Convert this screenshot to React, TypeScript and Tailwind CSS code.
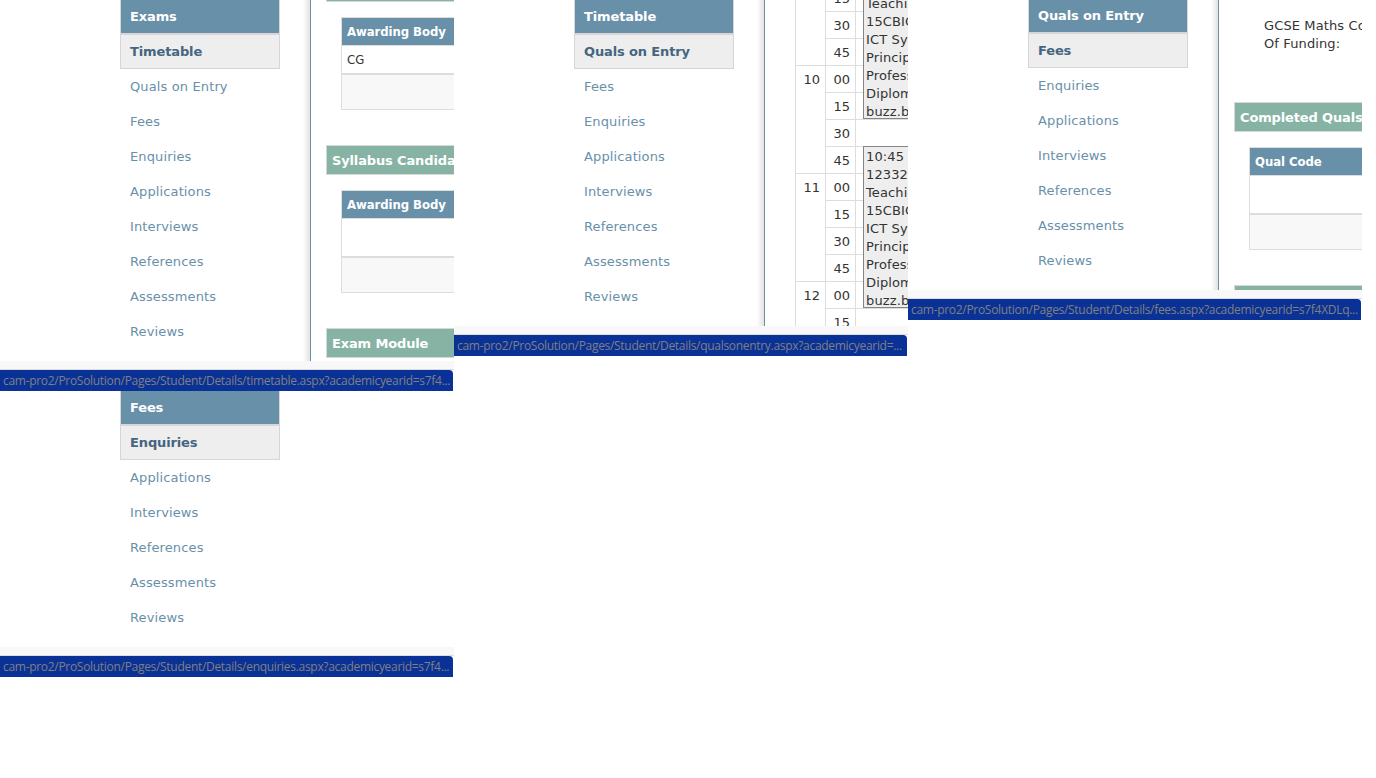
import type { ReactNode } from "react";

const navItems = [
  "Exams", "Timetable", "Quals on Entry", "Fees", "Enquiries",
  "Applications", "Interviews", "References", "Assessments", "Reviews",
];

function Shot({ start, height, status, navClass = "-mt-px", children }: {
  start: number; height: string; status: string; navClass?: string; children?: ReactNode;
}) {
  return (
    <section className="w-[454px] shrink-0 overflow-hidden">
      <div className={`flex overflow-hidden ${height}`}>
        <nav className={`ml-[120px] w-[160px] shrink-0 ${navClass}`}>
          {navItems.slice(start).map((item, i) => (
            <div
              key={item}
              className={
                "h-[35px] border pl-[9px] leading-[33px] whitespace-nowrap " +
                (i === 0
                  ? "border-[#d8d6d8] bg-[#6990a9] font-bold tracking-[-0.13px] text-white"
                  : i === 1
                    ? "border-[#d8d4d8] bg-[#eeeeee] font-bold tracking-[-0.13px] text-[#456580]"
                    : "border-transparent tracking-[0.13px] text-[#6990a9]")
              }
            >
              {item}
            </div>
          ))}
        </nav>
        {children && (
          <>
            <div className="ml-[23px] w-[7px] shrink-0 bg-linear-to-r from-white to-[#e2e2e2]" />
            <main className="w-[144px] shrink-0 overflow-hidden border-l border-[#6990a9] text-[#333333]">{children}</main>
          </>
        )}
      </div>
      <div className="h-[9px] border-b border-[#dddddd] bg-[#f8f8f8]" />
      <div className="h-[21px] w-[453px] overflow-hidden rounded-tr-[4px] bg-[#0a3196] pl-[3px] font-['Open_Sans',sans-serif] text-[12px] leading-[21px] tracking-[-0.3px] whitespace-nowrap text-[#808080]">
        {status}
      </div>
    </section>
  );
}

function Banner({ children, className = "" }: { children?: ReactNode; className?: string }) {
  return (
    <div className={`ml-[15px] h-[30px] w-[200px] border border-[#d6d8d6] bg-[#86b3a4] pl-[5px] font-bold leading-[30px] tracking-[-0.14px] whitespace-nowrap text-white ${className}`}>
      {children}
    </div>
  );
}

function Table({ title, cell, rowClass }: { title: string; cell?: string; rowClass: string }) {
  return (
    <div className="mt-[15px] ml-[30px] w-[200px] border border-[#dddddd] font-['DejaVu_Sans_Condensed','DejaVu_Sans',sans-serif] whitespace-nowrap">
      <div className="h-[28px] border-b border-[#dddddd] bg-[#6990a9] pl-[5px] font-bold leading-[27px] tracking-[-0.06px] text-white">{title}</div>
      <div className={`border-b border-[#dddddd] pl-[5px] leading-[27px] ${rowClass}`}>{cell}</div>
      <div className="h-[35px] border-t border-[#dddddd] bg-[#f8f8f8]" />
    </div>
  );
}

const hours = [
  { hour: "9", quarters: ["00", "15", "30", "45"] },
  { hour: "10", quarters: ["00", "15", "30", "45"] },
  { hour: "11", quarters: ["00", "15", "30", "45"] },
  { hour: "12", quarters: ["00", "15"] },
];

function Lesson({ lines, className }: { lines: string[]; className: string }) {
  return (
    <div className={`absolute left-[67px] h-[162px] w-[100px] overflow-hidden border border-[#858585] bg-[#eeeeee] pl-[2px] pt-px leading-[18px] tracking-[0.13px] whitespace-nowrap ${className}`}>
      {lines.map((l) => <div key={l} className="h-[18px]">{l}</div>)}
    </div>
  );
}

function Timetable() {
  const lesson = ["123328", "Teaching", "15CBICT", "ICT Sys", "Principles", "Profess", "Diploma", "buzz.b"];
  return (
    <div className="relative -mt-[43px] ml-[30px] w-[200px] border-l border-[#dddddd]">
      {hours.map(({ hour, quarters }) => (
        <div key={hour} className="flex">
          <div className="w-[29px] border-t border-[#dddddd] pr-[5px] text-right leading-[27px]">{hour}</div>
          <div className="w-[31px] border-x border-[#dddddd]">
            {quarters.map((q) => (
              <div key={q} className="h-[27px] border-t border-[#dddddd] pr-[5px] text-right leading-[27px]">{q}</div>
            ))}
          </div>
          <div className="grow">
            {quarters.map((q) => <div key={q} className="h-[27px] border-t border-[#dddddd]" />)}
          </div>
        </div>
      ))}
      <Lesson className="top-0" lines={["09:00", ...lesson]} />
      <Lesson className="top-[189px]" lines={["10:45", ...lesson]} />
    </div>
  );
}

export default function App() {
  return (
    <div className="h-[778px] w-[1376px] overflow-hidden bg-white font-['DejaVu_Sans',sans-serif] text-[13px]">
      <div className="flex h-[391px] items-start">
        <Shot start={0} height="h-[361px]" status="cam-pro2/ProSolution/Pages/Student/Details/timetable.aspx?academicyearid=s7f4...">
          <Banner className="-mt-[28px]" />
          <Table title="Awarding Body" cell="CG" rowClass="h-[28px]" />
          <Banner className="mt-[35px]">Syllabus Candidates</Banner>
          <Table title="Awarding Body" rowClass="h-[38px]" />
          <Banner className="mt-[35px]">Exam Module</Banner>
        </Shot>
        <Shot start={1} height="h-[326px]" status="cam-pro2/ProSolution/Pages/Student/Details/qualsonentry.aspx?academicyearid=...">
          <Timetable />
        </Shot>
        <Shot start={2} height="h-[290px]" navClass="-mt-[2px]" status="cam-pro2/ProSolution/Pages/Student/Details/fees.aspx?academicyearid=s7f4XDLq...">
          <div className="mt-[17px] ml-[45px] h-[85px] leading-[18px] tracking-[0.12px] whitespace-nowrap">
            GCSE Maths Condition<br />Of Funding:
          </div>
          <Banner>Completed Quals</Banner>
          <Table title="Qual Code" rowClass="h-[38px]" />
          <Banner className="mt-[35px]" />
        </Shot>
      </div>
      <Shot start={3} height="h-[256px]" status="cam-pro2/ProSolution/Pages/Student/Details/enquiries.aspx?academicyearid=s7f4..." />
    </div>
  );
}
